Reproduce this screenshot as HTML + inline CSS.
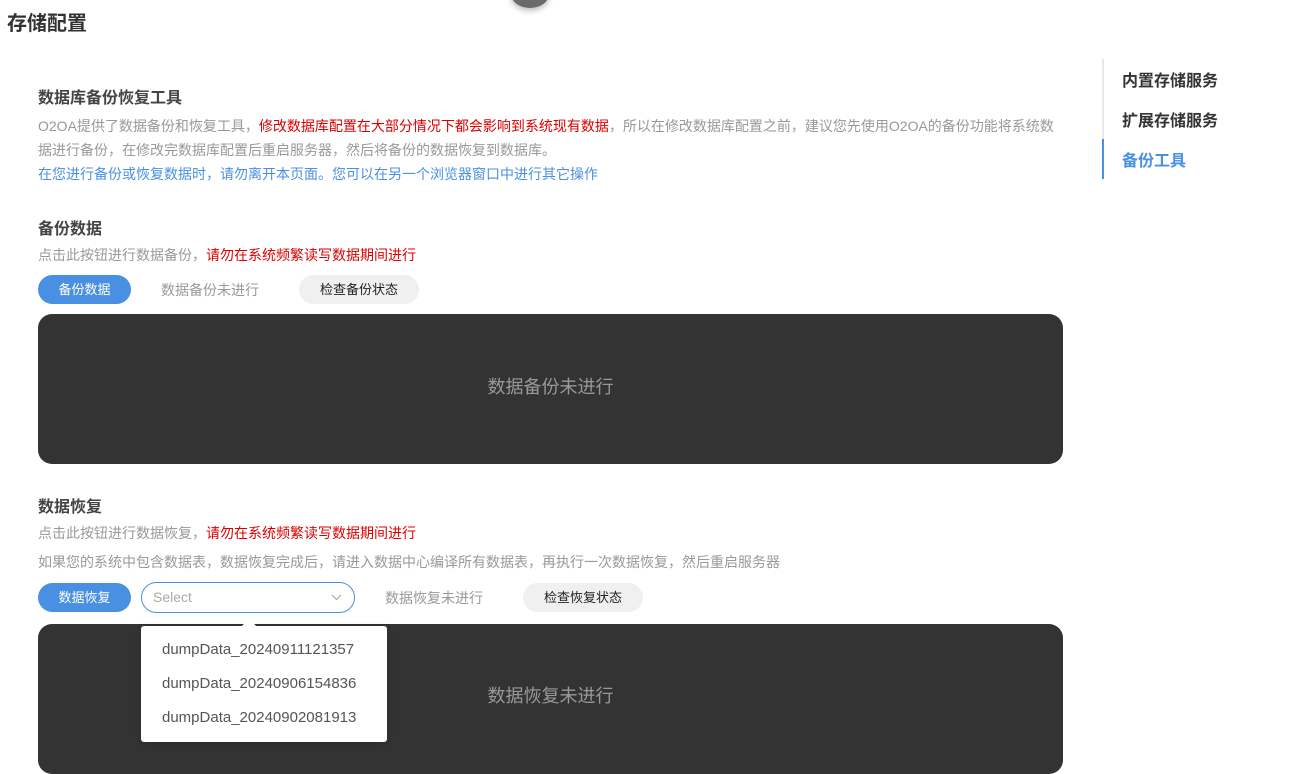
<!DOCTYPE html>
<html><head><meta charset="utf-8"><style>
*{margin:0;padding:0;box-sizing:border-box}
body{width:1292px;height:761px;overflow:hidden;background:#fff;font-family:"Liberation Sans","Noto Sans CJK SC",sans-serif;position:relative;color:#333}
.a{position:absolute;white-space:nowrap}
.h{font-weight:bold;font-size:16px;color:#444}
.t{font-size:14px;color:#999}
.r{color:#d00}
.btn{position:absolute;height:29px;border-radius:15px;font-size:13px;text-align:center;line-height:29px}
.blue{background:#4a90e2;color:#fff;width:93px}
.grey{background:#f0f0f0;color:#222;width:120px}
.dark{position:absolute;left:38px;width:1025px;background:#333;border-radius:14px;color:#999;font-size:18px;text-align:center}
</style></head><body>
<div class="a" style="left:511px;top:-20px;width:38px;height:28px;border-radius:50%;background:#6a6a6a;box-shadow:0 3px 6px rgba(0,0,0,.25)"></div>
<div class="a" style="left:7px;top:7px;font-size:20px;font-weight:bold;color:#333">存储配置</div>
<div class="a h" style="left:38px;top:84px">数据库备份恢复工具</div>
<div class="a t" style="left:38px;top:114px;line-height:24px;white-space:normal;width:1022px">O2OA提供了数据备份和恢复工具，<span class="r">修改数据库配置在大部分情况下都会影响到系统现有数据</span>，所以在修改数据库配置之前，建议您先使用O2OA的备份功能将系统数据进行备份，在修改完数据库配置后重启服务器，然后将备份的数据恢复到数据库。<br><span style="color:#4a90e2">在您进行备份或恢复数据时，请勿离开本页面。您可以在另一个浏览器窗口中进行其它操作</span></div>
<div class="a h" style="left:38px;top:215px">备份数据</div>
<div class="a t" style="left:38px;top:245px">点击此按钮进行数据备份，<span class="r">请勿在系统频繁读写数据期间进行</span></div>
<div class="btn blue" style="left:38px;top:275px">备份数据</div>
<div class="a t" style="left:161px;top:280px">数据备份未进行</div>
<div class="btn grey" style="left:299px;top:275px">检查备份状态</div>
<div class="dark" style="top:314px;height:150px;line-height:146px">数据备份未进行</div>
<div class="a h" style="left:38px;top:493px">数据恢复</div>
<div class="a t" style="left:38px;top:523px">点击此按钮进行数据恢复，<span class="r">请勿在系统频繁读写数据期间进行</span></div>
<div class="a t" style="left:38px;top:552px">如果您的系统中包含数据表，数据恢复完成后，请进入数据中心编译所有数据表，再执行一次数据恢复，然后重启服务器</div>
<div class="btn blue" style="left:38px;top:583px">数据恢复</div>
<div class="a" style="left:141px;top:582px;width:214px;height:31px;border:1px solid #4a90e2;border-radius:16px;font-size:14px;color:#aaa;line-height:29px;padding-left:11px">Select<svg style="position:absolute;right:12px;top:11px" width="11" height="7" viewBox="0 0 11 7"><path d="M1 1l4.5 4.5L10 1" fill="none" stroke="#aaa" stroke-width="1.2"/></svg></div>
<div class="a t" style="left:385px;top:588px">数据恢复未进行</div>
<div class="btn grey" style="left:523px;top:583px">检查恢复状态</div>
<div class="dark" style="top:624px;height:150px;line-height:144px">数据恢复未进行</div>
<div class="a" style="left:141px;top:626px;width:246px;height:116px;background:#fff;border-radius:3px;box-shadow:0 2px 8px rgba(0,0,0,.15);font-size:15px;color:#555;padding:7px 0 0 21px;line-height:34px">dumpData_20240911121357<br>dumpData_20240906154836<br>dumpData_20240902081913</div>
<div class="a" style="left:244px;top:621px;width:10px;height:10px;background:#fff;transform:rotate(45deg)"></div>
<div class="a" style="left:1102px;top:59px;width:2px;height:120px;background:#e8e8e8"></div>
<div class="a" style="left:1102px;top:139px;width:2px;height:40px;background:#4a90e2"></div>
<div class="a" style="left:1122px;top:67px;font-size:16px;font-weight:bold;color:#333">内置存储服务</div>
<div class="a" style="left:1122px;top:107px;font-size:16px;font-weight:bold;color:#333">扩展存储服务</div>
<div class="a" style="left:1122px;top:147px;font-size:16px;font-weight:bold;color:#4a90e2">备份工具</div>
</body></html>
